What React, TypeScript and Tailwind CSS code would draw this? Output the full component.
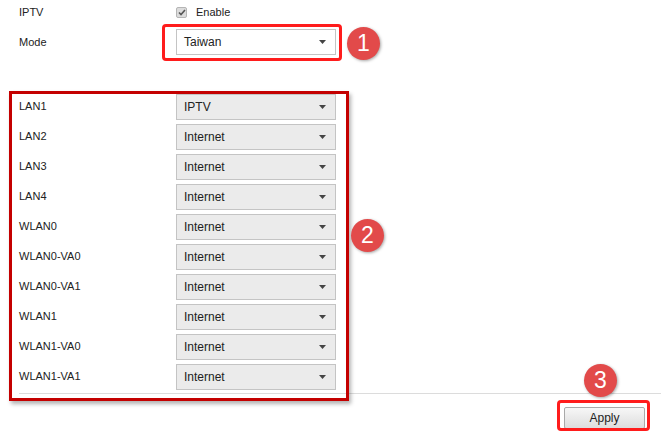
import React from "react";

const ports = [
  { name: "LAN1", value: "IPTV" },
  { name: "LAN2", value: "Internet" },
  { name: "LAN3", value: "Internet" },
  { name: "LAN4", value: "Internet" },
  { name: "WLAN0", value: "Internet" },
  { name: "WLAN0-VA0", value: "Internet" },
  { name: "WLAN0-VA1", value: "Internet" },
  { name: "WLAN1", value: "Internet" },
  { name: "WLAN1-VA0", value: "Internet" },
  { name: "WLAN1-VA1", value: "Internet" },
];

function Caret() {
  return (
    <svg width="7" height="4" viewBox="0 0 7 4" className="shrink-0">
      <path d="M0 0 L7 0 L3.5 4 Z" fill="#444" />
    </svg>
  );
}

function Select({ value, white }: { value: string; white?: boolean }) {
  return (
    <div
      className={
        "flex h-[26px] w-[160px] items-center justify-between border border-[#c4c4c4] pl-[7px] pr-[9px] text-[12px] text-[#222] " +
        (white ? "bg-white" : "bg-[#ebebeb]")
      }
    >
      <span>{value}</span>
      <Caret />
    </div>
  );
}

function Badge({ n, className }: { n: string; className: string }) {
  return (
    <div
      className={
        "absolute flex h-[33px] w-[33px] items-center justify-center rounded-full bg-[#e24a4a] text-[23px] leading-none text-white shadow-[1px_1px_3px_rgba(0,0,0,0.35)] " +
        className
      }
    >
      {n}
    </div>
  );
}

export default function App() {
  return (
    <div
      className="relative h-[434px] w-[661px] overflow-hidden bg-white text-[#222]"
      style={{ fontFamily: '"Liberation Sans", Arial, sans-serif' }}
    >
      {/* IPTV */}
      <div className="flex h-[24px] items-center pl-[19px] text-[11px]">
        <span className="w-[157px]">IPTV</span>
        <span className="flex h-[11px] w-[11px] items-center justify-center rounded-[2px] border border-[#b5b5b5] bg-[#dcdcdc]">
          <svg width="8" height="7" viewBox="0 0 8 7">
            <path d="M1 3.5 L3 5.5 L7 1" stroke="#555" strokeWidth="1.6" fill="none" />
          </svg>
        </span>
        <span className="ml-[9px]">Enable</span>
      </div>

      {/* Mode */}
      <div className="mt-[5px] flex items-center pl-[19px] text-[11px]">
        <span className="w-[157px]">Mode</span>
        <Select value="Taiwan" white />
      </div>

      {/* port mapping */}
      <div className="mt-[39px] flex flex-col gap-[4px] pl-[19px]">
        {ports.map((p) => (
          <div key={p.name} className="flex items-center text-[11px]">
            <span className="w-[157px] -translate-y-[1px]">{p.name}</span>
            <Select value={p.value} />
          </div>
        ))}
      </div>

      <div className="ml-[19px] mt-[3px] border-t border-[#dcdcdc]" />

      <div className="mt-[13px] flex pl-[564px]">
        <button className="h-[22px] w-[81px] rounded-[2px] border border-[#a9a9a9] bg-gradient-to-b from-[#f7f7f7] to-[#dddddd] text-[12px] text-[#222]">
          Apply
        </button>
      </div>

      {/* annotations */}
      <div className="absolute left-[162px] top-[24px] h-[37px] w-[180px] rounded-[4px] border-[3px] border-[#ff1c1c]" />
      <div className="absolute left-[9px] top-[91px] h-[310px] w-[340px] border-[3px] border-[#c40000] shadow-[2px_3px_4px_rgba(0,0,0,0.3)]" />
      <div className="absolute left-[557px] top-[400px] h-[31px] w-[93px] rounded-[4px] border-[3px] border-[#ff1c1c]" />

      <Badge n="1" className="left-[347px] top-[27px]" />
      <Badge n="2" className="left-[351px] top-[219px]" />
      <Badge n="3" className="left-[584px] top-[364px]" />
    </div>
  );
}
